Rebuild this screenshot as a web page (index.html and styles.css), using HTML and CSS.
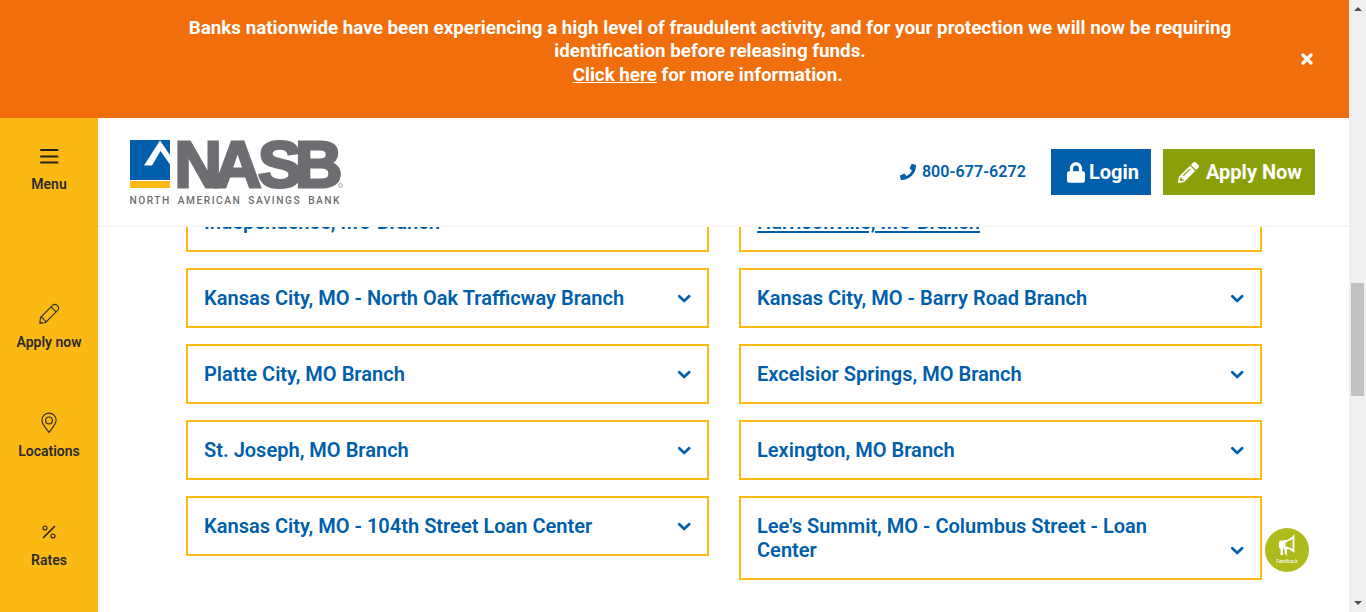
FILE: index.html
```html
<!DOCTYPE html>
<html lang="en">
<head>
<meta charset="utf-8">
<title>NASB Branch Locations</title>
<link rel="stylesheet" href="styles.css">
</head>
<body>
<svg class="symbols" aria-hidden="true">
  <symbol id="chevron" viewBox="0 0 14 10"><path d="M2.300 2.300l4.900 4.700 4.900-4.700" fill="none" stroke="currentColor" stroke-width="2.700" stroke-linecap="round" stroke-linejoin="miter"/></symbol>
</svg>
<div class="window">
  <div class="page">
    <div class="banner">
      <p class="banner-text">Banks nationwide have been experiencing a high level of fraudulent activity, and for your protection we will now be requiring identification before releasing funds.<br><a class="banner-link" href="#">Click here</a> for more information.&nbsp;</p>
      <button class="banner-close" aria-label="Close"><svg width="12" height="12" viewBox="0 0 12 12"><path d="M2 2l8 8M10 2l-8 8" stroke="#fff" stroke-width="3.2" stroke-linecap="round"/></svg></button>
    </div>
    <div class="body">
      <nav class="sidebar">
        <a class="side-item side-menu" href="#">
          <svg class="side-icon" viewBox="0 0 24 24"><path d="M4 6h16.500M4 12.500h16.500M4 18.500h16.500" stroke="#222" stroke-width="2" stroke-linecap="round"/></svg>
          <span>Menu</span>
        </a>
        <a class="side-item" href="#">
          <svg class="side-icon" viewBox="0 0 24 24" fill="none" stroke="#333" stroke-width="1.1" stroke-linejoin="round"><path d="M2.800 21.500L3.500 15.500 15.800 3.200Q18 1.300 20.400 3.600T20.900 8.200L8.600 20.500zM14.100 4.900l5 5M3.500 15.500l2.500.2.4 2.100 2 .4.2 2.300M3 19.500l1.700 1.700"/></svg>
          <span>Apply now</span>
        </a>
        <a class="side-item" href="#">
          <svg class="side-icon" viewBox="0 0 24 24" fill="none" stroke="#333" stroke-width="1.2"><path d="M12 21.500C9 17 4.900 13.200 4.900 9.200a7.100 7.100 0 0 1 14.200 0C19.100 13.200 15 17 12 21.500z"/><circle cx="12" cy="9.400" r="3.400"/></svg>
          <span>Locations</span>
        </a>
        <a class="side-item" href="#">
          <svg class="side-icon" viewBox="0 0 24 24" fill="none" stroke="#222"><path d="M6.500 17.500L17.500 6.500" stroke-width="1.6" stroke-linecap="round"/><circle cx="8" cy="8" r="2" stroke-width="1.100"/><circle cx="16" cy="16" r="2" stroke-width="1.100"/></svg>
          <span>Rates</span>
        </a>
      </nav>
      <div class="content">
        <header class="header">
          <svg class="logo" width="216" height="70" viewBox="0 0 216 70">
            <rect y="2" width="40" height="40" fill="#005eab"/>
            <rect y="43" width="40" height="7" fill="#fdb913"/>
            <path d="M14 27.500L30 2.500 40 17V26.500L30.500 13 22 27.500z" fill="#fff"/>
            <text class="logo-name" x="44.500 84 128 165" y="48.600">NASB</text>
            <circle cx="210.500" cy="47.500" r="1.900" fill="none" stroke="#6d6e71" stroke-width=".6"/>
            <text class="logo-tag" x="-.500" y="66" textLength="210">NORTH AMERICAN SAVINGS BANK</text>
          </svg>
          <div class="actions">
            <a class="phone" href="#"><svg width="16" height="16" viewBox="0 0 512 512"><path fill="currentColor" d="M493.400 24.600l-104-24c-11.300-2.600-22.900 3.300-27.500 13.900l-48 112c-4.200 9.800-1.400 21.300 6.900 28l60.600 49.600c-36 76.700-98.900 140.500-177.200 177.200l-49.600-60.600c-6.800-8.300-18.200-11.100-28-6.900l-112 48C3.900 366.500-2 378.100.6 389.400l24 104C27.100 504.200 36.700 512 48 512c256.100 0 464-207.500 464-464 0-11.200-7.700-20.900-18.600-23.400z"/></svg>800-677-6272</a>
            <a class="button login" href="#"><svg width="18" height="21" viewBox="0 0 448 512"><path fill="currentColor" d="M400 224h-24v-72C376 68.200 307.800 0 224 0S72 68.200 72 152v72H48c-26.500 0-48 21.500-48 48v192c0 26.500 21.500 48 48 48h352c26.500 0 48-21.500 48-48V272c0-26.500-21.500-48-48-48zm-104 0H152v-72c0-39.700 32.300-72 72-72s72 32.300 72 72v72z"/></svg>Login</a>
            <a class="button apply" href="#"><svg width="21" height="21" viewBox="0 0 512 512"><path fill="currentColor" d="M497.900 142.100l-46.100 46.100c-4.700 4.700-12.300 4.700-17 0l-111-111c-4.700-4.700-4.700-12.300 0-17l46.100-46.100c18.700-18.700 49.100-18.700 67.900 0l60.100 60.100c18.800 18.700 18.800 49.100 0 67.900zM284.200 99.800L21.600 362.400.4 483.900c-2.900 16.400 11.400 30.600 27.800 27.800l121.500-21.300 262.600-262.600c4.700-4.700 4.700-12.300 0-17l-111-111c-4.800-4.700-12.400-4.700-17.100 0zM124.100 339.900c-5.500-5.500-5.500-14.300 0-19.800l154-154c5.500-5.500 14.300-5.500 19.800 0s5.500 14.300 0 19.800l-154 154c-5.500 5.500-14.300 5.500-19.800 0zM88 424h48v36.300l-64.500 11.300-31.100-31.100L51.700 376H88v48z"/></svg>Apply Now</a>
          </div>
        </header>
        <main class="branches">
          <div class="column">
            <a class="branch" href="#"><span class="name">Independence, MO Branch</span><svg class="chevron"><use href="#chevron"/></svg></a>
            <a class="branch" href="#"><span class="name">Kansas City, MO - North Oak Trafficway Branch</span><svg class="chevron"><use href="#chevron"/></svg></a>
            <a class="branch" href="#"><span class="name">Platte City, MO Branch</span><svg class="chevron"><use href="#chevron"/></svg></a>
            <a class="branch" href="#"><span class="name">St. Joseph, MO Branch</span><svg class="chevron"><use href="#chevron"/></svg></a>
            <a class="branch" href="#"><span class="name">Kansas City, MO - 104th Street Loan Center</span><svg class="chevron"><use href="#chevron"/></svg></a>
          </div>
          <div class="column">
            <a class="branch active" href="#"><span class="name">Harrisonville, MO Branch</span><svg class="chevron"><use href="#chevron"/></svg></a>
            <a class="branch" href="#"><span class="name">Kansas City, MO - Barry Road Branch</span><svg class="chevron"><use href="#chevron"/></svg></a>
            <a class="branch" href="#"><span class="name">Excelsior Springs, MO Branch</span><svg class="chevron"><use href="#chevron"/></svg></a>
            <a class="branch" href="#"><span class="name">Lexington, MO Branch</span><svg class="chevron"><use href="#chevron"/></svg></a>
            <a class="branch" href="#"><span class="name">Lee's Summit, MO - Columbus Street - Loan Center</span><svg class="chevron"><use href="#chevron"/></svg></a>
          </div>
        </main>
      </div>
    </div>
  </div>
  <div class="scrollbar">
    <svg width="8" height="4" viewBox="0 0 8 4"><path d="M0 4l4-4 4 4z" fill="#505050"/></svg>
    <div class="thumb"></div>
    <svg class="scroll-down" width="8" height="4" viewBox="0 0 8 4"><path d="M0 0h8L4 4z" fill="#505050"/></svg>
  </div>
  <a class="feedback" href="#">
    <svg width="18" height="24" viewBox="0 0 18 24"><path d="M6 7.500Q12 6.500 15.500 2.500V17Q12 14 8 13.500" fill="none" stroke="#fff" stroke-width="1.800"/><path d="M2.500 6.500h6.500v2H7.500v4.500h1.500v9L6.500 19v-4.500H5V21H2.500v-6L1 13.500V8z" fill="#fff"/></svg>
    <span>Feedback</span>
  </a>
</div>
</body>
</html>
```
FILE: styles.css
```css
* { box-sizing: border-box; }
body { margin: 0; font-family: Roboto, "Liberation Sans", sans-serif; background: #fff; }
a { color: inherit; text-decoration: none; }
.symbols { display: none; }
.window { display: flex; width: 1366px; height: 612px; overflow: hidden; }
.page { flex: 1; display: flex; flex-direction: column; }

.banner { display: flex; align-items: center; height: 118px; padding: 0 36px 0 175px; background: #f06e0c; color: #fff; }
.banner-text { flex: 1; height: 84px; margin: 0; padding: 0 56px 0 0; font-size: 18.8px; font-weight: 700; line-height: 23.4px; text-align: center; }
.banner-link { text-decoration: underline; }
.banner-close { display: flex; padding: 0; border: 0; background: none; }

.body { flex: 1; display: flex; min-height: 0; }
.sidebar { width: 98px; padding-top: 26px; background: #fdb913; }
.side-item { display: flex; flex-direction: column; align-items: center; gap: 8px; height: 109px; color: #2b2b2b; font-size: 14px; font-weight: 600; line-height: 16px; }
.side-menu { height: 158px; }
.side-icon { width: 24px; height: 24px; }
.content { flex: 1; display: flex; flex-direction: column; min-width: 0; }

.header { display: flex; justify-content: space-between; flex: none; height: 109px; padding: 20px 34px 0 32px; border-bottom: 2px solid #f7f7f7; }
.logo { overflow: visible; }
.logo-name { font: 700 65.5px "Liberation Sans", sans-serif; fill: #6d6e71; stroke: #6d6e71; stroke-width: 3px; }
.logo-tag { font: 500 10.2px Roboto, sans-serif; fill: #6d6e71; word-spacing: 3px; }
.actions { display: flex; align-items: center; height: 68px; }
.phone { display: flex; align-items: center; gap: 6px; margin-right: 25px; color: #005eab; font-size: 16px; font-weight: 600; letter-spacing: .08px; line-height: 18px; }
.button { display: flex; align-items: center; height: 46px; color: #fff; font-size: 20px; font-weight: 700; }
.login { width: 100px; padding-left: 16px; gap: 4px; background: #005eab; }
.apply { width: 152px; margin-left: 12px; padding-left: 15px; gap: 7px; background: #8a9f0a; }

.branches { flex: 1; display: grid; grid-template-columns: 523px 523px; gap: 30px; padding-left: 88px; overflow: hidden; }
.column { display: flex; flex-direction: column; gap: 16px; margin-top: -35px; }
.branch { display: flex; align-items: flex-end; justify-content: space-between; flex: none; min-height: 60px; padding: 16px; border: 2px solid #fdb913; color: #005eab; font-size: 20.05px; font-weight: 600; line-height: 24px; }
.name { max-width: 440px; }
.active .name { text-decoration: underline; }
.chevron { width: 14px; height: 10px; margin-bottom: 6px; }

.scrollbar { display: flex; flex-direction: column; align-items: center; width: 17px; padding: 7px 0; background: #f0f0f0; }
.thumb { width: 13px; height: 113px; margin-top: 272px; background: #c1c1c1; }
.scroll-down { margin-top: auto; }
.feedback { position: absolute; left: 1265px; top: 528px; display: flex; flex-direction: column; align-items: center; width: 44px; height: 44px; padding-top: 6px; border-radius: 50%; background: #afba1d; color: #fff; font-size: 5px; line-height: 6px; }
```
